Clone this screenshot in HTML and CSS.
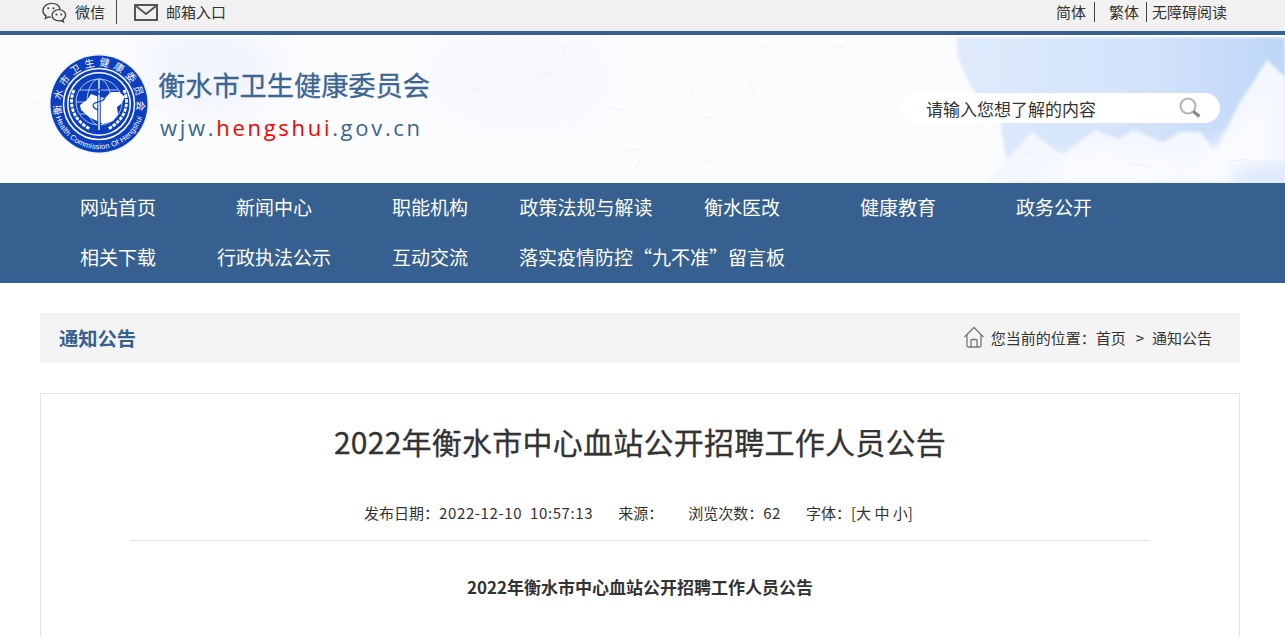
FILE: index.html
```html
<!DOCTYPE html>
<html lang="zh-CN">
<head>
  <meta charset="UTF-8">
  <title>2022年衡水市中心血站公开招聘工作人员公告</title>
  <link rel="stylesheet" href="styles.css">
</head>
<body>

  <div class="topbar">
    <div class="topbar-left">
      <a class="top-link wechat">
        <svg width="27" height="24" viewBox="0 0 28 25" fill="none" stroke="#444" stroke-width="1.400">
          <path d="M11 1.500C5.800 1.500 2 4.900 2 9c0 2.300 1.200 4.200 3.200 5.500l-.7 2.600 3-1.500c1 .3 2 .4 3 .4"/>
          <path d="M11 1.500c4.400 0 8 2.400 8.800 5.900"/>
          <path d="M18.500 8c-4 0-7 2.600-7 5.800s3 5.800 7 5.800c.8 0 1.500-.1 2.200-.3l2.600 1.400-.6-2.400c1.800-1.100 2.900-2.700 2.900-4.500C25.600 10.600 22.500 8 18.500 8z"/>
          <circle cx="7.500" cy="6.500" r="1.100" fill="#444" stroke="none"/>
          <circle cx="13" cy="6.500" r="1.100" fill="#444" stroke="none"/>
          <circle cx="16" cy="13" r="1.100" fill="#444" stroke="none"/>
          <circle cx="21" cy="13" r="1.100" fill="#444" stroke="none"/>
        </svg>
        微信
      </a>
      <a class="top-link mail">
        <svg width="24" height="17" viewBox="0 0 24 17" fill="none" stroke="#555" stroke-width="2">
          <rect x="1" y="1" width="22" height="15"/>
          <path d="M2 2l10 8 10-8"/>
        </svg>
        邮箱入口
      </a>
    </div>
    <div class="topbar-right">
      <a class="lang first">简体</a>
      <a class="lang second">繁体</a>
      <a class="lang third">无障碍阅读</a>
    </div>
  </div>

  <div class="header">
    <svg class="header-bg" width="1285" height="146" viewBox="0 0 1285 146">
      <defs>
        <filter id="blur1"><feGaussianBlur stdDeviation="16"/></filter>
        <filter id="blur2"><feGaussianBlur stdDeviation="1.500"/></filter>
        <filter id="blur3"><feGaussianBlur stdDeviation="8"/></filter>
        <linearGradient id="wash" x1="0" y1="0" x2="1" y2="0">
          <stop offset="0" stop-color="#dfeafc"/>
          <stop offset=".6" stop-color="#d2e2fa"/>
          <stop offset="1" stop-color="#bed6f8"/>
        </linearGradient>
      </defs>
      <rect width="1285" height="146" fill="#fbfcfe"/>
      <ellipse cx="210" cy="30" rx="70" ry="50" fill="#f2f5fc" filter="url(#blur1)"/>
      <ellipse cx="520" cy="40" rx="90" ry="50" fill="#f6f8fd" filter="url(#blur1)"/>
      <path d="M957 0H1285V60L1285 146H1010L1000 83C975 60 955 30 957 0z" fill="url(#wash)" filter="url(#blur2)"/>
      <path d="M985 146L1032 95L1062 118L1095 93L1118 102L1133 93L1163 105L1180 95L1201 95L1215 115L1240 65L1250 50L1267 23L1285 40V146z" fill="#f3f7fe" filter="url(#blur2)"/>
      <path d="M1040 146L1062 118L1100 112L1140 116L1190 125L1240 90L1267 50L1270 146z" fill="#f9fbff" filter="url(#blur3)"/>
      <ellipse cx="1280" cy="140" rx="50" ry="14" fill="#dfe9fb" filter="url(#blur3)"/>
      <g class="specks" fill="none" stroke="#c7ced8" stroke-width=".8">
        <path d="M540 36l10 1M560 8c5 0 6 3 4 8M660 20l8 2M760 8l10 3M610 70l16 4M572 88l6-6M690 48l3 8M750 46l5 10M706 80c6 2 10 0 12-4M625 116c6-3 12-4 18-3M640 122l-5 12M818 92l-8-8M832 8l12 3M1010 60l4 6M1090 20l-5-4M1124 58l-6 6M1230 124l18-2M1130 126l20 4M1020 120l10-6M300 14l8 3M340 60l6 2M120 90l5 4M30 66l8-1M480 120l6-6M700 120l12 6M470 50l8 4"/>
      </g>
    </svg>
    <div class="header-inner">
      <div class="brand">
        <svg class="logo" width="100" height="100" viewBox="0 0 100 100">
          <defs>
            <path id="arcTop" d="M14.300 63A38 38 0 1 1 85.700 63"/>
            <path id="arcBottom" d="M5 50A45 45 0 0 0 95 50"/>
          </defs>
          <circle cx="50" cy="50" r="50" fill="#eef2fb"/>
          <circle cx="50" cy="50" r="48.500" fill="#0b3fc0"/>
          <circle cx="50" cy="50" r="35.500" fill="#0b3fc0" stroke="#fff" stroke-width="1.500"/>
          <circle cx="50" cy="50" r="32" fill="#fff"/>
          <circle cx="50" cy="50" r="30.500" fill="#0b3fc0"/>
          <text class="logo-cn"><textPath href="#arcTop" startOffset="50%" text-anchor="middle">衡水市卫生健康委员会</textPath></text>
          <text class="logo-en"><textPath href="#arcBottom" startOffset="50%" text-anchor="middle">Health Commission Of Hengshui</textPath></text>
          <g fill="none" stroke="#c4d2f4" stroke-width=".9">
            <circle cx="50" cy="48" r="23"/>
            <ellipse cx="50" cy="48" rx="12" ry="23"/>
            <path d="M27 48h46M31 36h38M31 60h38"/>
          </g>
          <path d="M31 51L38 46L42 40L50 43L56 44L62 38L70 38L76 43L72 50L68 53L69 60L64 67L54 70L46 66L40 63L32 56z" fill="#fff"/>
          <path d="M50 26v50" stroke="#0b3fc0" stroke-width="3.500"/>
          <path d="M50 26v50" stroke="#fff" stroke-width="1.400"/>
          <path d="M55 34c-8 1-8 5-3 7s5 5-3 7-5 6 0 8" fill="none" stroke="#0b3fc0" stroke-width="1.200"/>
          <g fill="none" stroke="#fff" stroke-width="2.800" stroke-dasharray="3.500 1.200">
            <path d="M25 36c-6 14-1 30 16 39"/>
            <path d="M75 36c6 14 1 30-16 39"/>
          </g>
        </svg>
        <div class="brand-text">
          <div class="brand-name">衡水市卫生健康委员会</div>
          <div class="brand-url">wjw.<span class="red">hengshui</span>.gov.cn</div>
        </div>
      </div>
      <div class="search">
        <span class="search-text">请输入您想了解的内容</span>
        <svg width="24" height="22" viewBox="0 0 24 22" fill="none">
          <circle cx="10" cy="9" r="7.500" stroke="#b8b8b8" stroke-width="2.200"/>
          <path d="M15.500 14.500l6 5" stroke="#888" stroke-width="3.200"/>
        </svg>
      </div>
    </div>
  </div>

  <div class="nav">
    <div class="nav-inner">
      <a class="nav-item">网站首页</a>
      <a class="nav-item">新闻中心</a>
      <a class="nav-item">职能机构</a>
      <a class="nav-item">政策法规与解读</a>
      <a class="nav-item">衡水医改</a>
      <a class="nav-item">健康教育</a>
      <a class="nav-item">政务公开</a>
      <a class="nav-item">相关下载</a>
      <a class="nav-item">行政执法公示</a>
      <a class="nav-item">互动交流</a>
      <a class="nav-item">落实疫情防控“九不准”留言板</a>
    </div>
  </div>

  <div class="main">
    <div class="crumb-bar">
      <div class="crumb-title">通知公告</div>
      <div class="crumb">
        <svg width="22" height="22" viewBox="0 0 22 22" fill="none" stroke="#777" stroke-width="1.300">
          <path d="M1.500 11L11 1.500 20.500 11"/>
          <path d="M4 9v10.500a1.500 1.500 0 0 0 1.500 1.500h11a1.500 1.500 0 0 0 1.500-1.500V9"/>
          <path d="M8 21v-6.500a1 1 0 0 1 1-1h4a1 1 0 0 1 1 1V21"/>
        </svg>
        <span>您当前的位置：</span><a>首页</a><span class="sep">&gt;</span><a>通知公告</a>
      </div>
    </div>

    <div class="article">
      <h1>2022年衡水市中心血站公开招聘工作人员公告</h1>
      <div class="meta">
        <span>发布日期：<span class="num">2022-12-10&nbsp;&nbsp;10:57:13</span></span>
        <span>来源：</span>
        <span>浏览次数：<span class="num">62</span></span>
        <span>字体：[大 中 小]</span>
      </div>
      <h2>2022年衡水市中心血站公开招聘工作人员公告</h2>
    </div>
  </div>

</body>
</html>
```

FILE: styles.css
```css
html, body {
  margin: 0;
  padding: 0;
}

body {
  font-family: "Noto Sans CJK SC", "Liberation Sans", sans-serif;
  background: #fff;
  color: #333;
}

a {
  color: inherit;
  text-decoration: none;
}

/* top bar */
.topbar {
  height: 31px;
  background: #f1f1f1;
  border-bottom: 4px solid #36608f;
  display: flex;
  justify-content: space-between;
  font-size: 15px;
  color: #333;
}

.topbar-left {
  display: flex;
  padding-left: 41px;
}

.top-link {
  display: flex;
  align-items: center;
  height: 24px;
  line-height: 22px;
}

.wechat {
  gap: 7px;
  padding-right: 11px;
  border-right: 1px solid #444;
}

.wechat svg {
  margin-top: 3px;
}

.mail {
  gap: 8px;
  padding-left: 17px;
}

.topbar-right {
  display: flex;
  padding-right: 58px;
}

.lang {
  height: 20px;
  line-height: 20px;
  margin-top: 2px;
}

.lang.first {
  padding-right: 8px;
  border-right: 1px solid #444;
}

.lang.second {
  padding-left: 14px;
  padding-right: 7px;
  border-right: 1px solid #444;
}

.lang.third {
  padding-left: 5px;
}

/* header */
.header {
  position: relative;
  height: 146px;
  border-top: 2px solid #fff;
  overflow: hidden;
}

.header-bg {
  position: absolute;
  left: 0;
  top: 0;
}

.specks {
  opacity: .35;
}

.header-inner {
  position: relative;
  height: 146px;
  margin: 0 65px 0 49px;
  display: flex;
  justify-content: space-between;
}

.brand {
  display: flex;
  padding-top: 17px;
}

.logo {
  display: block;
}

.logo-cn {
  font-size: 10px;
  fill: #fff;
  letter-spacing: 4px;
}

.logo-en {
  font-family: "Liberation Sans", sans-serif;
  font-size: 7.500px;
  letter-spacing: .2px;
  fill: #fff;
}

.brand-text {
  margin-left: 9px;
}

.brand-name {
  font-size: 27.200px;
  line-height: 40px;
  margin-top: 10px;
  color: #3b6593;
  -webkit-text-stroke: .3px #3b6593;
}

.brand-url {
  font-family: "Open Sans", sans-serif;
  font-size: 22px;
  line-height: 30px;
  margin-top: 8px;
  margin-left: 2px;
  letter-spacing: 2.700px;
  color: #3b6593;
}

.red {
  color: #f00;
}

.search {
  width: 320px;
  height: 30px;
  margin-top: 56px;
  padding: 0 18px 0 26px;
  box-sizing: border-box;
  background: #fff;
  border-radius: 15px;
  display: flex;
  align-items: center;
  justify-content: space-between;
  font-size: 17px;
  color: #333;
}

/* nav */
.nav {
  height: 100px;
  background: #36608f;
}

.nav-inner {
  width: 1200px;
  margin-left: 40px;
  display: flex;
  flex-wrap: wrap;
}

.nav-item {
  min-width: 156px;
  height: 50px;
  padding: 0 11px;
  box-sizing: border-box;
  line-height: 48px;
  text-align: center;
  font-size: 19px;
  color: #fff;
}

/* page body */
.main {
  width: 1200px;
  margin: 30px 0 0 40px;
}

.crumb-bar {
  height: 50px;
  background: #f4f4f4;
  display: flex;
  justify-content: space-between;
  align-items: center;
  padding: 0 28px 0 19px;
}

.crumb-title {
  font-size: 19.300px;
  line-height: 48px;
  font-weight: bold;
  color: #36608f;
}

.crumb {
  display: flex;
  align-items: center;
  padding-bottom: 2px;
  font-size: 15px;
  color: #333;
}

.crumb svg {
  margin-right: 6px;
}

.sep {
  margin: 0 8px 0 10px;
}

.article {
  margin-top: 30px;
  height: 244px;
  border: 1px solid #e5e5e5;
  border-bottom: none;
  box-sizing: border-box;
}

.article h1 {
  margin: 25px 0 0;
  font-size: 30px;
  line-height: 44px;
  letter-spacing: .25px;
  font-weight: normal;
  text-align: center;
  color: #333;
  -webkit-text-stroke: .3px #333;
}

.meta {
  margin: 35px 89px 0;
  height: 42px;
  padding-right: 3px;
  line-height: 30px;
  border-bottom: 1px solid #e5e5e5;
  display: flex;
  justify-content: center;
  gap: 25px;
  font-size: 15px;
  color: #333;
}

.num {
  letter-spacing: .6px;
}

.article h2 {
  margin: 33px 0 0;
  font-size: 17px;
  line-height: 26px;
  text-align: center;
  color: #333;
}
```
